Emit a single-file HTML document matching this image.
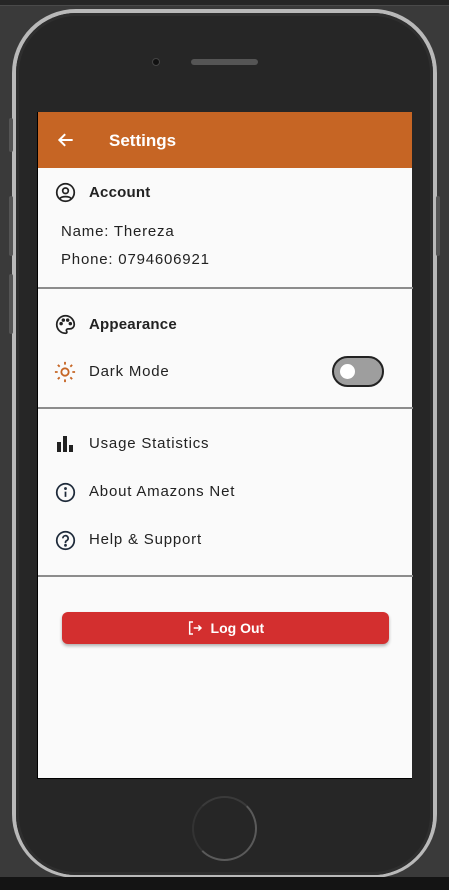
<!DOCTYPE html><html><head><style>
*{margin:0;padding:0;box-sizing:border-box}
body{width:449px;height:890px;background:#3a3a3a;position:relative;overflow:hidden;font-family:"Liberation Sans",sans-serif}
.top{position:absolute;left:0;top:0;width:449px;height:6px;background:#262626;border-bottom:1px solid #4a4a4a}
.bot{position:absolute;left:0;top:877px;width:449px;height:13px;background:#141414}
.phone{position:absolute;left:12px;top:9px;width:425px;height:869px;border-radius:64px;background:#b9b9b9}
.inner{position:absolute;left:16px;top:13px;width:417px;height:862px;border-radius:60px;background:#262626;box-shadow:inset 0 0 0 3px #2e2e2e}
.btn{position:absolute;background:#555;width:4px;border-radius:2px}
.screen{position:absolute;left:37px;top:112px;width:375px;height:667px;background:#fafafa;border-left:1px solid #000;border-bottom:1px solid #000}
.bar{height:56px;background:#c66524;color:#fff;position:relative}
.bar .t{position:absolute;left:71px;top:19px;font-size:17px;font-weight:bold}
.txt{position:absolute;color:#222;font-size:15px;letter-spacing:.8px}
.h{font-weight:bold;font-size:15px;letter-spacing:.2px}
.div{position:absolute;left:0;width:375px;height:2px;background:#8c8c8c}
svg{position:absolute}
</style></head><body>
<div class="top"></div>
<div class="phone"></div>
<div class="btn" style="left:9px;top:118px;height:34px"></div>
<div class="btn" style="left:9px;top:196px;height:60px"></div>
<div class="btn" style="left:9px;top:274px;height:60px"></div>
<div class="btn" style="left:436px;top:196px;height:60px"></div>
<div class="inner"></div>
<div style="position:absolute;left:152px;top:58px;width:8px;height:8px;border-radius:50%;background:#111;border:1px solid #444"></div>
<div style="position:absolute;left:191px;top:59px;width:67px;height:6px;border-radius:3px;background:#555"></div>
<div style="position:absolute;left:192px;top:796px;width:65px;height:65px;border-radius:50%;border:2px solid #5a5a5a;border-left-color:#333;border-top-color:#3a3a3a"></div>
<div class="bot"></div>
<div class="screen">
<div class="bar">
<svg style="left:18px;top:18px" width="20" height="20" viewBox="0 0 24 24"><path d="M20 12H5M11 5l-7 7 7 7" stroke="#fff" stroke-width="2.4" fill="none"/></svg>
<div class="t">Settings</div></div>
<svg style="left:17px;top:70px" width="21" height="21" viewBox="0 0 24 24" fill="none" stroke="#222" stroke-width="2"><circle cx="12" cy="12" r="10"/><circle cx="12" cy="10" r="3.2"/><path d="M5.5 19c2-3 11-3 13 0"/></svg>
<div class="txt h" style="left:51px;top:72px">Account</div>
<div class="txt" style="left:23px;top:111px">Name: Thereza</div>
<div class="txt" style="left:23px;top:139px">Phone: 0794606921</div>
<div class="div" style="top:175px"></div>
<svg style="left:17px;top:202px" width="21" height="21" viewBox="0 0 24 24" fill="none" stroke="#222" stroke-width="2"><path d="M12 2a10 10 0 0 0 0 20c1.5 0 2-1 1.3-2.2-.8-1.3 0-2.8 1.5-2.8H17a5 5 0 0 0 5-5c0-5.5-4.5-10-10-10z"/><circle cx="7" cy="11" r="1" fill="#222"/><circle cx="9.5" cy="7" r="1" fill="#222"/><circle cx="14.5" cy="7" r="1" fill="#222"/><circle cx="17.5" cy="11" r="1" fill="#222"/></svg>
<div class="txt h" style="left:51px;top:204px">Appearance</div>
<svg style="left:16px;top:249px" width="22" height="22" viewBox="0 0 24 24" fill="none" stroke="#c66524" stroke-width="2"><circle cx="12" cy="12" r="4"/><path d="M12 1v3M12 20v3M1 12h3M20 12h3M4.2 4.2l2 2M17.8 17.8l2 2M4.2 19.8l2-2M17.8 6.2l2-2"/></svg>
<div class="txt" style="left:51px;top:251px">Dark Mode</div>
<div style="position:absolute;left:294px;top:244px;width:52px;height:31px;border-radius:16px;background:#9e9e9e;border:2px solid #222"></div>
<div style="position:absolute;left:302px;top:252px;width:15px;height:15px;border-radius:50%;background:#fff"></div>
<div class="div" style="top:295px"></div>
<svg style="left:19px;top:324px" width="17" height="16" viewBox="0 0 17 16" fill="#222"><rect x="0" y="6" width="4" height="10"/><rect x="6" y="0" width="4" height="16"/><rect x="12" y="9" width="4" height="7"/></svg>
<div class="txt" style="left:51px;top:323px">Usage Statistics</div>
<svg style="left:17px;top:370px" width="21" height="21" viewBox="0 0 24 24" fill="none" stroke="#1e2a3a" stroke-width="2"><circle cx="12" cy="12" r="10"/><path d="M12 11v6"/><circle cx="12" cy="7.5" r=".6" fill="#1e2a3a"/></svg>
<div class="txt" style="left:51px;top:371px">About Amazons Net</div>
<svg style="left:17px;top:418px" width="21" height="21" viewBox="0 0 24 24" fill="none" stroke="#1e2a3a" stroke-width="2"><circle cx="12" cy="12" r="10"/><path d="M9 9.5a3 3 0 1 1 4 2.8c-.7.4-1 1-1 1.7V15"/><circle cx="12" cy="17.5" r=".6" fill="#1e2a3a"/></svg>
<div class="txt" style="left:51px;top:419px">Help &amp; Support</div>
<div class="div" style="top:463px"></div>
<div style="position:absolute;left:24px;top:500px;width:327px;height:32px;border-radius:6px;background:#d32f2f;box-shadow:0 2px 3px rgba(0,0,0,.3);color:#fff;font-weight:bold;font-size:14px;text-align:center;line-height:32px"><svg style="position:relative;left:0;top:3px;display:inline-block" width="16" height="16" viewBox="0 0 24 24" fill="none" stroke="#fff" stroke-width="2.2"><path d="M9 3H4v18h5M10 12h11M17 8l4 4-4 4"/></svg>&nbsp; Log Out</div>
</div>
</body></html>
